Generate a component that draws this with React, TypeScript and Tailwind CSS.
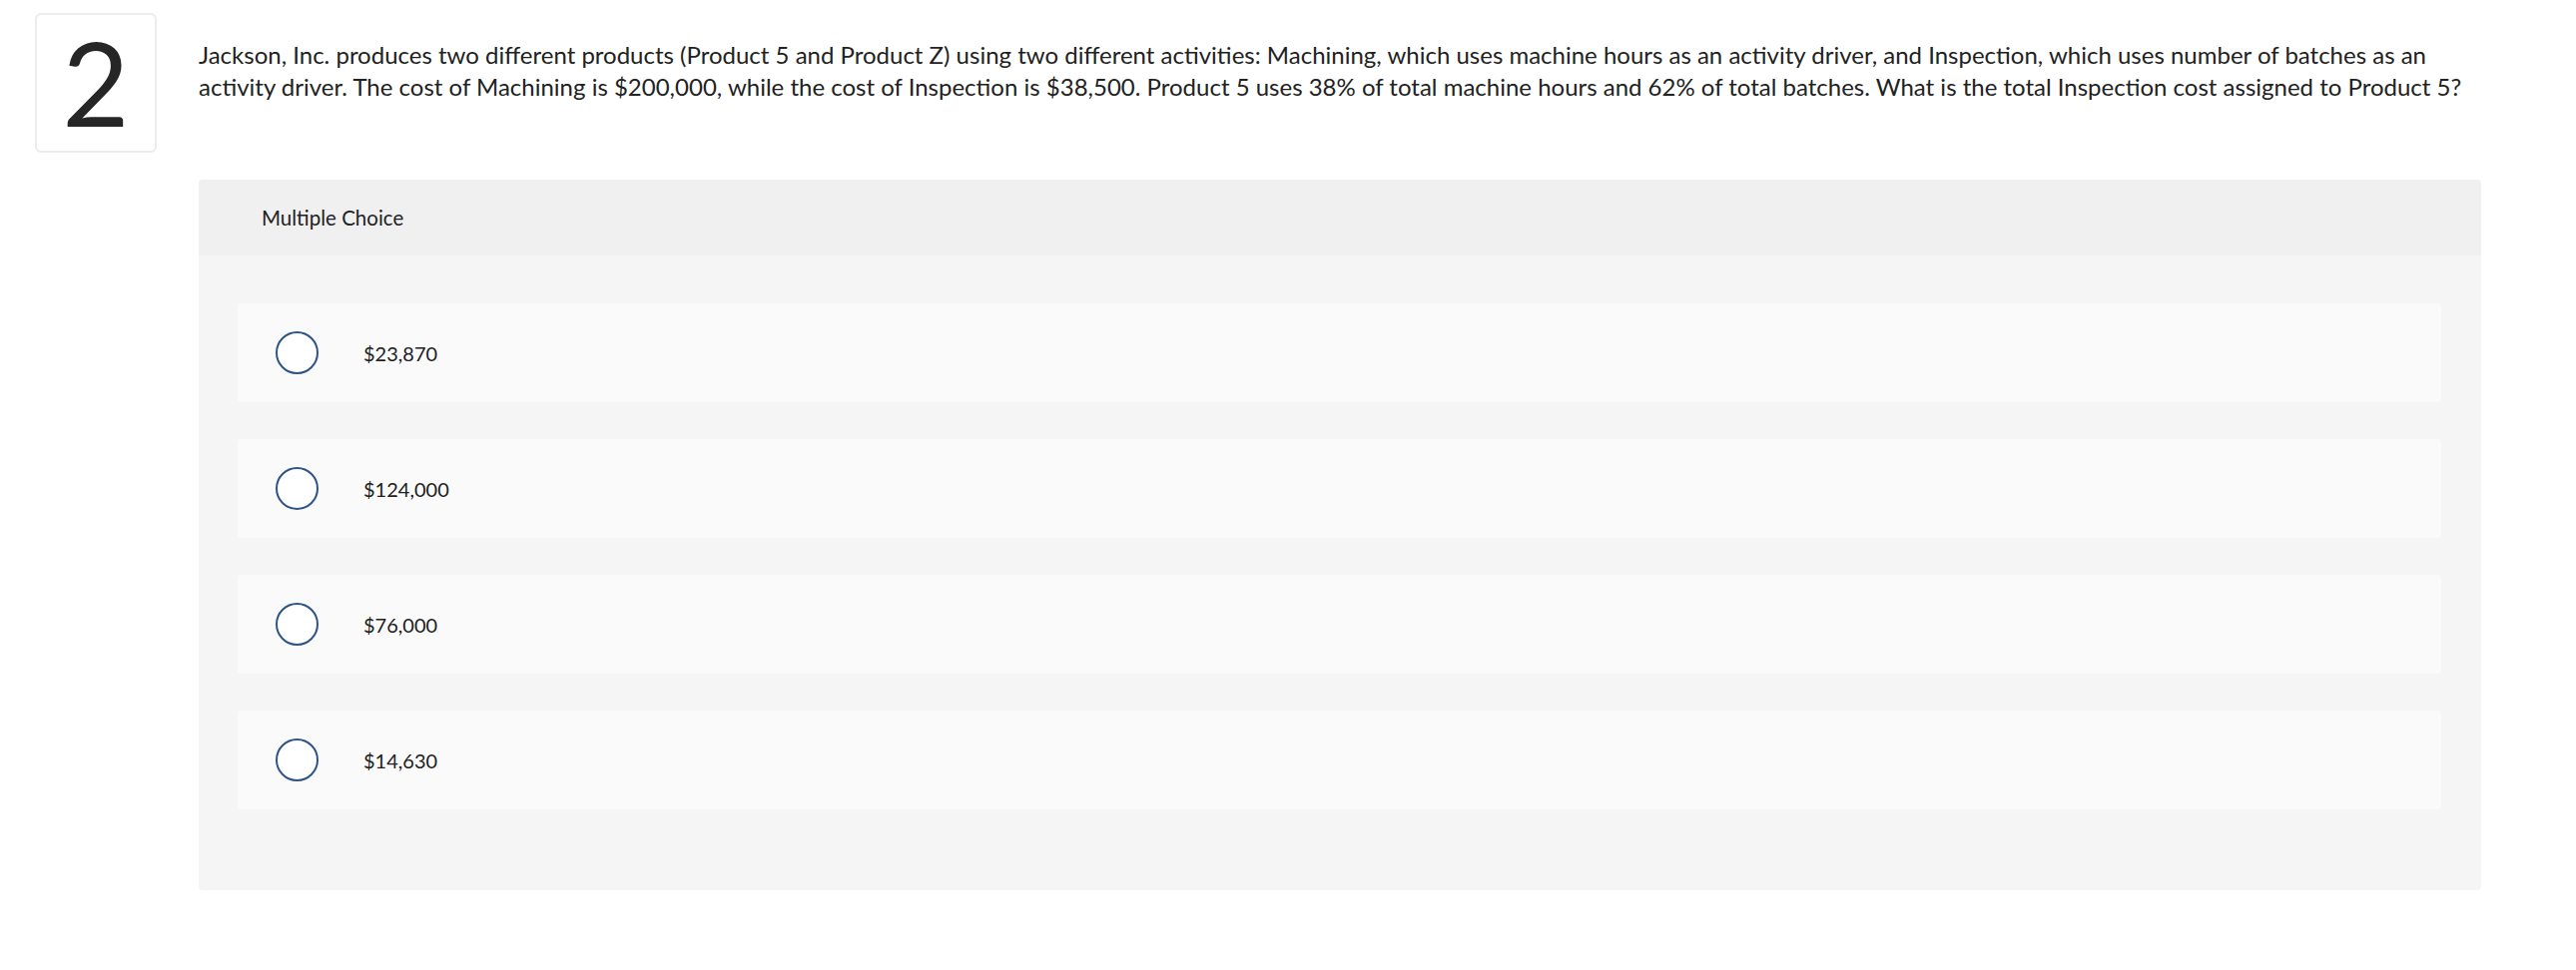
const question =
  'Jackson, Inc. produces two different products (Product 5 and Product Z) using two different activities: Machining, which uses machine hours as an activity driver, and Inspection, which uses number of batches as an activity driver. The cost of Machining is $200,000, while the cost of Inspection is $38,500. Product 5 uses 38% of total machine hours and 62% of total batches. What is the total Inspection cost assigned to Product 5?';

const choices = ['$23,870', '$124,000', '$76,000', '$14,630'];

function ChoiceRow({ label }: { label: string }) {
  return (
    <div className="flex h-[99px] items-center rounded-[4px] bg-[#fafafa] pl-[38px]">
      <span className="h-[43px] w-[43px] shrink-0 rounded-full border-2 border-[#2c5489] bg-white" />
      <span className="ml-[45px] text-[20px] leading-none text-[#222]">{label}</span>
    </div>
  );
}

export default function App() {
  return (
    <div className="min-h-[972px] bg-white pl-[35px] pt-[13px] font-['Lato',sans-serif] text-[#222]">
      <div className="flex">
        {/* question number */}
        <div className="flex h-[140px] w-[122px] shrink-0 items-center justify-center rounded-[6px] border-2 border-[#ececec] bg-white">
          <span className="text-[116px] font-normal leading-none text-[#262626]">2</span>
        </div>

        <div className="ml-[42px] w-[2286px]">
          <p className="mt-[26px] text-[24px] leading-[32px] text-[#222]">{question}</p>

          {/* answer panel */}
          <div className="mt-[77px] overflow-hidden rounded-[4px] bg-[#f5f5f5]">
            <div className="flex h-[76px] items-center bg-[#f0f0f0] pl-[63px] text-[20.5px] text-[#222]">
              Multiple Choice
            </div>
            <div className="flex flex-col gap-[37px] pb-[81px] pl-[39px] pr-[40px] pt-[48px]">
              {choices.map((c) => (
                <ChoiceRow key={c} label={c} />
              ))}
            </div>
          </div>
        </div>
      </div>
    </div>
  );
}
